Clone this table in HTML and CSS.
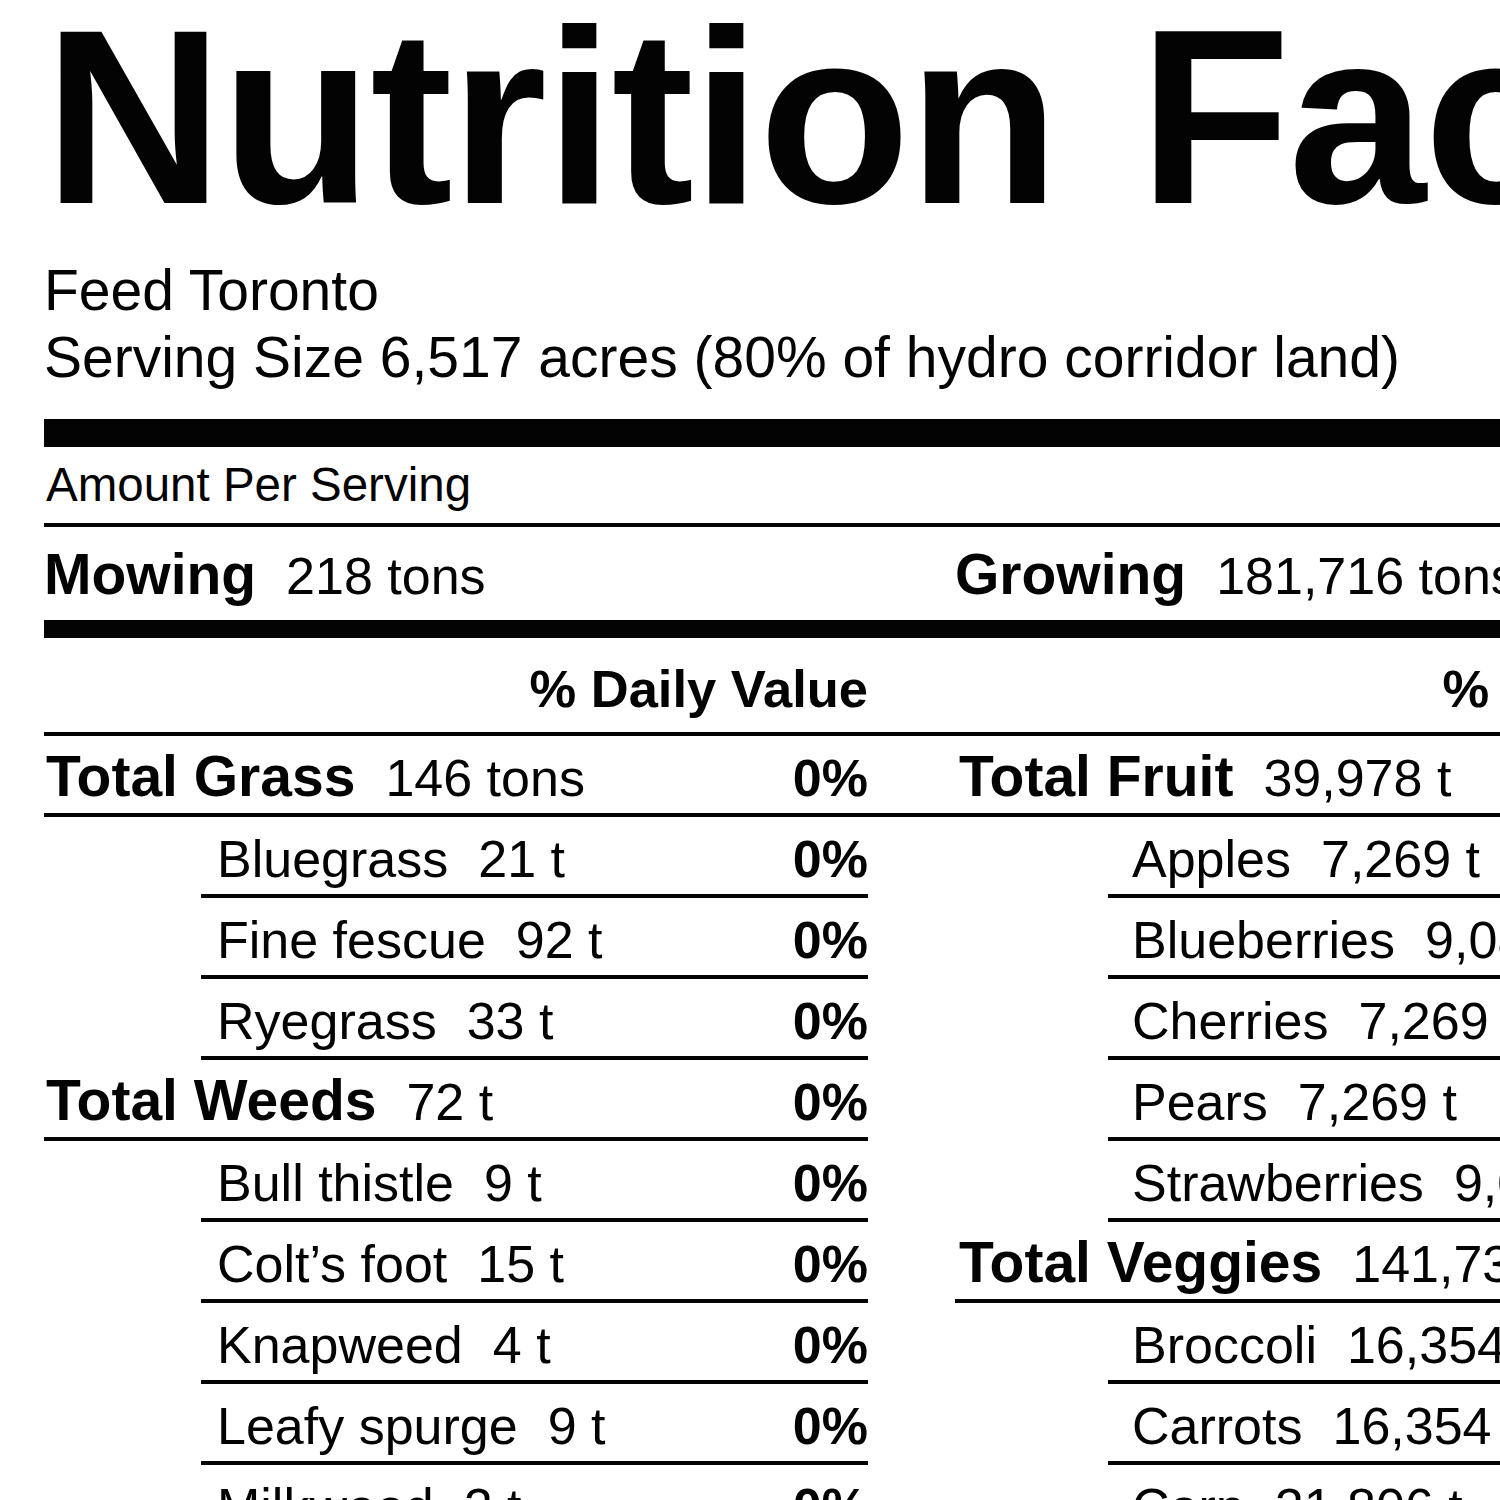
FILE: index.html
```html
<!DOCTYPE html>
<html lang="en">
<head>
<meta charset="utf-8">
<title>Nutrition Facts</title>
<link rel="stylesheet" href="styles.css">
</head>
<body>
<div class="label">
  <h1 class="title">Nutrition Facts</h1>
  <p class="meta meta-first">Feed Toronto</p>
  <p class="meta">Serving Size 6,517 acres (80% of hydro corridor land)</p>

  <div class="bar bar-thick"></div>
  <div class="amount-per">Amount Per Serving</div>

  <div class="pair summary">
    <div class="cell"><span class="name">Mowing</span><span class="amt">218 tons</span></div>
    <div class="cell cell-right"><span class="name">Growing</span><span class="amt">181,716 tons</span></div>
  </div>

  <div class="bar bar-medium"></div>

  <div class="pair dv-head">
    <div class="dv">% Daily Value</div>
    <div class="dv">% Daily Value</div>
  </div>

  <div class="pair first">
    <div class="row top"><span class="name">Total Grass</span><span class="amt">146 tons</span><span class="pct">0%</span></div>
    <div class="row top right"><span class="name">Total Fruit</span><span class="amt">39,978 t</span><span class="pct">22%</span></div>
  </div>

  <div class="pair columns">
    <div class="col">
      <div class="row sub"><span class="name">Bluegrass</span><span class="amt">21 t</span><span class="pct">0%</span></div>
      <div class="row sub"><span class="name">Fine fescue</span><span class="amt">92 t</span><span class="pct">0%</span></div>
      <div class="row sub"><span class="name">Ryegrass</span><span class="amt">33 t</span><span class="pct">0%</span></div>
      <div class="row top"><span class="name">Total Weeds</span><span class="amt">72 t</span><span class="pct">0%</span></div>
      <div class="row sub"><span class="name">Bull thistle</span><span class="amt">9 t</span><span class="pct">0%</span></div>
      <div class="row sub"><span class="name">Colt’s foot</span><span class="amt">15 t</span><span class="pct">0%</span></div>
      <div class="row sub"><span class="name">Knapweed</span><span class="amt">4 t</span><span class="pct">0%</span></div>
      <div class="row sub"><span class="name">Leafy spurge</span><span class="amt">9 t</span><span class="pct">0%</span></div>
      <div class="row sub"><span class="name">Milkweed</span><span class="amt">2 t</span><span class="pct">0%</span></div>
    </div>
    <div class="col col-right">
      <div class="row sub"><span class="name">Apples</span><span class="amt">7,269 t</span><span class="pct">4%</span></div>
      <div class="row sub"><span class="name">Blueberries</span><span class="amt">9,086 t</span><span class="pct">5%</span></div>
      <div class="row sub"><span class="name">Cherries</span><span class="amt">7,269 t</span><span class="pct">4%</span></div>
      <div class="row sub"><span class="name">Pears</span><span class="amt">7,269 t</span><span class="pct">4%</span></div>
      <div class="row sub"><span class="name">Strawberries</span><span class="amt">9,085 t</span><span class="pct">5%</span></div>
      <div class="row top"><span class="name">Total Veggies</span><span class="amt">141,738 t</span><span class="pct">78%</span></div>
      <div class="row sub"><span class="name">Broccoli</span><span class="amt">16,354 t</span><span class="pct">9%</span></div>
      <div class="row sub"><span class="name">Carrots</span><span class="amt">16,354 t</span><span class="pct">9%</span></div>
      <div class="row sub"><span class="name">Corn</span><span class="amt">21,806 t</span><span class="pct">12%</span></div>
    </div>
  </div>
</div>
</body>
</html>
```

FILE: styles.css
```css
html, body {
  margin: 0;
  padding: 0;
  background: #ffffff;
  overflow: hidden;
}

body {
  font-family: "Liberation Sans", Arial, Helvetica, sans-serif;
  color: #030303;
}

.label {
  width: 1737px;
  padding: 13px 0 0 44px;
}

.title {
  margin: 0;
  font-size: 248px;
  line-height: 208px;
  font-weight: 700;
  letter-spacing: -2.2px;
  word-spacing: 15px;
  white-space: nowrap;
}

.meta {
  margin: 0;
  font-size: 57px;
  line-height: 67px;
  white-space: nowrap;
}

.meta-first {
  margin-top: 36px;
}

.bar {
  background: #030303;
}

.bar-thick {
  margin-top: 28px;
  height: 28px;
}

.bar-medium {
  height: 18px;
}

.amount-per {
  font-size: 47.5px;
  line-height: 56px;
  padding: 10px 0 10px 2px;
  border-bottom: 4px solid #030303;
}

.pair {
  display: grid;
  grid-template-columns: 824px 826px;
  column-gap: 87px;
}

.summary {
  padding: 17px 0 14px;
  line-height: 60px;
}

.cell {
  display: flex;
  align-items: baseline;
}

.name {
  white-space: nowrap;
}

.amt {
  margin-left: 30px;
  white-space: nowrap;
  font-size: 52px;
}

.summary .name {
  font-size: 57px;
  font-weight: 700;
}

.dv-head {
  padding: 21px 0 13px;
  line-height: 60px;
  border-bottom: 4px solid #030303;
}

.dv {
  text-align: right;
  font-size: 52.5px;
  font-weight: 700;
}

.first {
  border-bottom: 4px solid #030303;
}

.first .row {
  height: 77px;
  border-bottom: 0;
}

.columns {
  align-items: start;
}

.col {
  display: flex;
  flex-direction: column;
}

.row {
  display: flex;
  align-items: baseline;
  box-sizing: border-box;
  height: 81px;
  padding-top: 12px;
  line-height: 60px;
  font-size: 52px;
  border-bottom: 4px solid #030303;
  white-space: nowrap;
}

.row.top {
  padding-top: 10px;
  padding-left: 2px;
}

.row.top.right,
.col-right .row.top {
  padding-left: 4px;
}

.row.top .name {
  font-size: 57px;
  font-weight: 700;
}

.row.sub {
  margin-left: 157px;
  padding-left: 16px;
}

.col-right .row.sub {
  margin-left: 153px;
  padding-left: 24px;
}

.pct {
  margin-left: auto;
  font-weight: 700;
}
```
